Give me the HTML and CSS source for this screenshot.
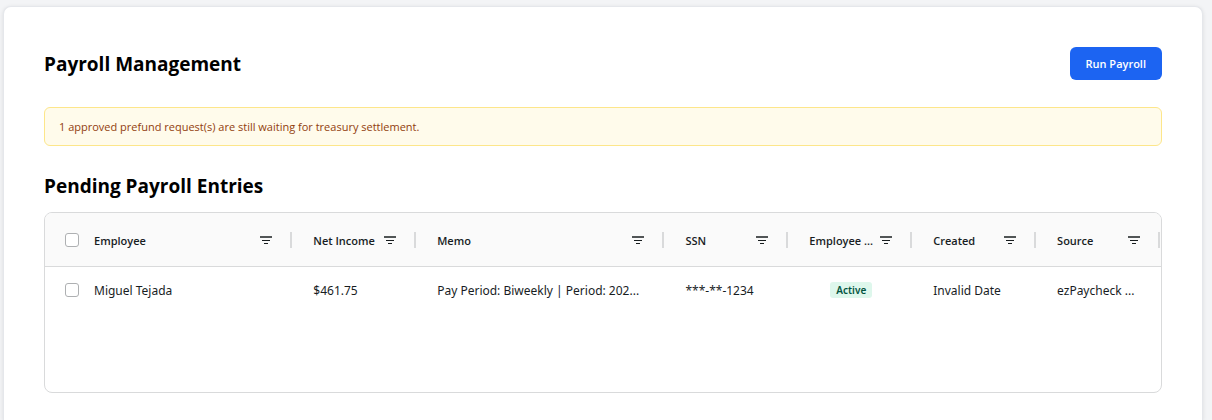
FILE: index.html
```html
<!DOCTYPE html>
<html lang="en">
<head>
    <meta charset="UTF-8">
    <meta name="viewport" content="width=device-width, initial-scale=1.0">
    <title>Payroll Management</title>
    <link rel="stylesheet" href="styles.css">
</head>
<body>

    <svg class="sprite" aria-hidden="true">
        <symbol id="filter" viewBox="0 0 12 8">
            <path d="M0 0h12v2H0z" opacity="0.75"/>
            <path d="M2 4h8v1H2z"/>
            <path d="M4 7h4v1H4z"/>
        </symbol>
    </svg>

    <main class="card">
        <header class="page-header">
            <h1>Payroll Management</h1>
            <button type="button" class="run-button">Run Payroll</button>
        </header>

        <p class="notice">1 approved prefund request(s) are still waiting for treasury settlement.</p>

        <h2>Pending Payroll Entries</h2>

        <div class="grid">
            <table>
                <colgroup>
                    <col class="col-wide">
                    <col>
                    <col class="col-wide">
                    <col>
                    <col>
                    <col>
                    <col>
                </colgroup>
                <thead>
                    <tr>
                        <th>
                            <div class="head">
                                <input type="checkbox" aria-label="Select all rows">
                                <span class="label">Employee</span>
                                <button type="button" class="filter" aria-label="Filter Employee"><svg><use href="#filter"/></svg></button>
                            </div>
                        </th>
                        <th>
                            <div class="head">
                                <span class="label">Net Income</span>
                                <button type="button" class="filter" aria-label="Filter Net Income"><svg><use href="#filter"/></svg></button>
                            </div>
                        </th>
                        <th>
                            <div class="head">
                                <span class="label">Memo</span>
                                <button type="button" class="filter" aria-label="Filter Memo"><svg><use href="#filter"/></svg></button>
                            </div>
                        </th>
                        <th>
                            <div class="head">
                                <span class="label">SSN</span>
                                <button type="button" class="filter" aria-label="Filter SSN"><svg><use href="#filter"/></svg></button>
                            </div>
                        </th>
                        <th>
                            <div class="head">
                                <span class="label">Employee ...</span>
                                <button type="button" class="filter" aria-label="Filter Employee Status"><svg><use href="#filter"/></svg></button>
                            </div>
                        </th>
                        <th>
                            <div class="head">
                                <span class="label">Created</span>
                                <button type="button" class="filter" aria-label="Filter Created"><svg><use href="#filter"/></svg></button>
                            </div>
                        </th>
                        <th>
                            <div class="head">
                                <span class="label">Source</span>
                                <button type="button" class="filter" aria-label="Filter Source"><svg><use href="#filter"/></svg></button>
                            </div>
                        </th>
                    </tr>
                </thead>
                <tbody>
                    <tr>
                        <td>
                            <label class="select">
                                <input type="checkbox">
                                <span>Miguel Tejada</span>
                            </label>
                        </td>
                        <td>$461.75</td>
                        <td>Pay Period: Biweekly | Period: 202...</td>
                        <td>***-**-1234</td>
                        <td class="status"><span class="badge">Active</span></td>
                        <td>Invalid Date</td>
                        <td>ezPaycheck ...</td>
                    </tr>
                </tbody>
            </table>
        </div>
    </main>

</body>
</html>
```
FILE: styles.css
```css
* {
    box-sizing: border-box;
}

body {
    margin: 0;
    padding: 6px 9px 0 3px;
    background-color: #f3f4f6;
    color: #181d1f;
    font-family: 'Segoe UI', 'Open Sans', sans-serif;
    font-size: 11px;
}

.sprite {
    display: none;
}

.card {
    min-height: calc(100vh - 6px);
    padding: 40px 40px 27px;
    background-color: #fff;
    border: 1px solid #e5e7eb;
    border-bottom: none;
    border-radius: 8px 8px 0 0;
    box-shadow: 0 1px 4px rgba(0, 0, 0, 0.1);
}

.page-header {
    display: flex;
    align-items: center;
    justify-content: space-between;
    margin-bottom: 27px;
}

h1,
h2 {
    margin: 0;
    color: #000;
    font-size: 19px;
    font-weight: 700;
    line-height: 28px;
}

h2 {
    margin: 26px 0 12px;
}

.run-button {
    padding: 0 16px;
    height: 33px;
    background-color: #1c64f2;
    color: #fff;
    border: none;
    border-radius: 6px;
    font-family: inherit;
    font-size: 11px;
    font-weight: 600;
    cursor: pointer;
}

.notice {
    margin: 0;
    padding: 9px 14px;
    background-color: #fffbeb;
    color: #92400e;
    border: 1px solid #fde68a;
    border-radius: 6px;
    line-height: 19px;
}

.grid {
    min-height: 181px;
    border: 1px solid #d9dadb;
    border-radius: 8px;
    overflow: hidden;
}

table {
    width: 100%;
    table-layout: fixed;
    border-collapse: separate;
    border-spacing: 0;
}

.col-wide {
    width: 22.25%;
}

th {
    height: 54px;
    padding: 0;
    background-color: #fafafa;
    border-bottom: 1px solid #d9dadb;
    font-weight: 600;
}

.head {
    display: flex;
    align-items: center;
    height: 16px;
    margin-right: 1px;
    padding: 0 18px 0 20px;
    border-right: 2px solid #d9dadb;
}

.label {
    flex: 1;
    padding-top: 1px;
    text-align: left;
    white-space: nowrap;
}

.filter {
    display: flex;
    padding: 0;
    background: none;
    border: none;
    color: #181d1f;
    cursor: pointer;
}

.filter svg {
    width: 12px;
    height: 8px;
    fill: currentColor;
}

td {
    height: 46px;
    padding: 0 0 0 20px;
    font-family: 'Segoe UI', 'Noto Sans', sans-serif;
    font-size: 12px;
    white-space: nowrap;
}

.select {
    display: flex;
    align-items: center;
}

input[type="checkbox"] {
    appearance: none;
    width: 14px;
    height: 14px;
    margin: 0 15px 0 0;
    background-color: #fff;
    border: 1px solid #aeb0b2;
    border-radius: 3px;
}

.status {
    padding: 0 0 2px;
    text-align: center;
}

.badge {
    display: inline-block;
    padding: 0 6px;
    background-color: #def7ec;
    color: #03543f;
    border-radius: 3px;
    font-size: 10px;
    font-weight: 600;
    line-height: 16px;
}
```
